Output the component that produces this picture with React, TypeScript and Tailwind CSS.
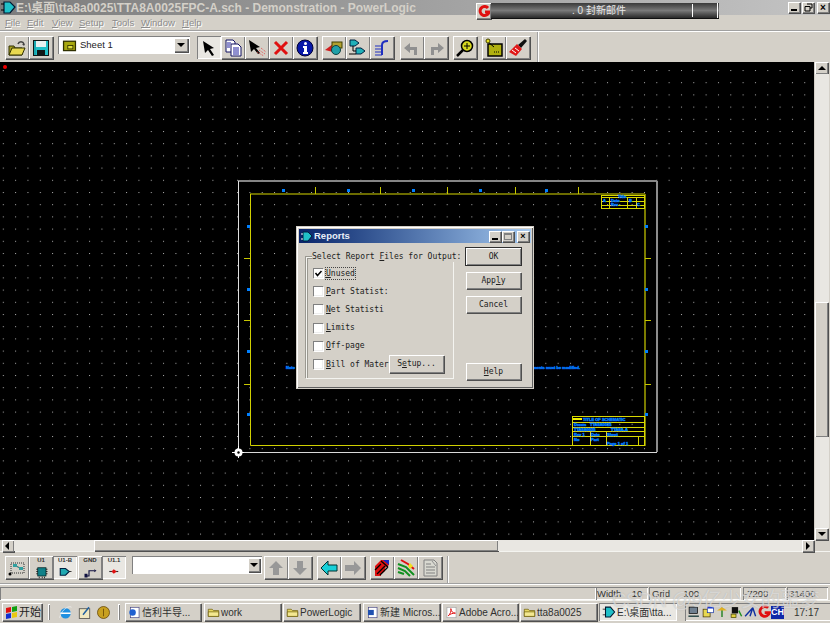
import React from "react";

const raised = "shadow-[inset_1px_1px_0_#fff,inset_-1px_-1px_0_#808080,1px_1px_0_#505050] bg-[#d4d0c8]";
const sunken = "shadow-[inset_1px_1px_0_#808080,inset_-1px_-1px_0_#fff]";
const dither = "bg-[#e9e7e2]";
const mono = "font-['DejaVu_Sans_Mono','Liberation_Mono',monospace] text-[8px] text-[#202020]";

function Ico({ children, s = 20 }: { children: React.ReactNode; s?: number }) {
  return <svg width={s} height={s} viewBox="0 0 20 20" className="block">{children}</svg>;
}

function Btn({ children, on, w = "w-[24px]", cls = "" }: { children?: React.ReactNode; on?: boolean; w?: string; cls?: string }) {
  return (
    <div className={`${w} h-[23px] shrink-0 flex items-center justify-center ${on ? `${sunken} ${dither}` : raised} ${cls}`}>{children}</div>
  );
}

const icons: Record<string, React.ReactNode> = {
  open: <Ico><path d="M2 8h5l1 2h7v7H2z" fill="#a8a020" stroke="#303000" /><path d="M2 17l3-7h13l-3 7z" fill="#e8d850" stroke="#303000" /><path d="M11 6c1-3 5-3 6 0" fill="none" stroke="#404040" strokeWidth="1.5" /><path d="M17 8l-2-2h3z" fill="#404040" /></Ico>,
  save: <Ico><rect x="2" y="2" width="16" height="16" fill="#101818" /><rect x="3" y="3" width="14" height="14" fill="#20c0c8" /><rect x="5" y="3" width="10" height="6" fill="#e8f0f0" /><rect x="6" y="12" width="8" height="5" fill="#101818" /><rect x="3" y="3" width="2" height="14" fill="#18a8b0" /></Ico>,
  sel: <Ico><path d="M4 3l11 7-4 1 4 6-2 1-4-6-3 3z" fill="#000" /></Ico>,
  copy: <Ico><path d="M3 2h7l2 2v10H3z" fill="#fff" stroke="#101060" /><path d="M8 6h7l3 3v9H8z" fill="#fff" stroke="#101060" /><path d="M10 10h6M10 12h6M10 14h6M10 16h6M4 5h4M4 7h3M4 9h3" stroke="#2020a0" /></Ico>,
  arrowRed: <Ico><path d="M2 2l11 7-4 1 4 5-2 1-4-5-3 3z" fill="#000" /><path d="M10 14l7 4M12 12l6 4M14 10l5 4" stroke="#e05050" strokeDasharray="1 1" /></Ico>,
  del: <Ico><path d="M4 4l12 12M16 4L4 16" stroke="#e01010" strokeWidth="3" /></Ico>,
  info: <Ico><circle cx="10" cy="10" r="8" fill="#0818a8" stroke="#000030" /><circle cx="10.5" cy="5.5" r="1.5" fill="#fff" /><path d="M8 8h4v6h1v2H8v-2h1v-4H8z" fill="#fff" /></Ico>,
  part: <Ico><path d="M1 12l8-6v8z" fill="#d02020" /><rect x="8" y="4" width="10" height="6" fill="#b0a030" stroke="#404000" /><circle cx="12" cy="12" r="4.5" fill="#20a0a8" stroke="#104040" /></Ico>,
  gate: <Ico><path d="M2 2h5l4 3-4 3H2z" fill="#20b0b8" stroke="#002040" /><path d="M8 10h5l4 3-4 3H8z" fill="#20b0b8" stroke="#002040" /><path d="M5 8v5h3M1 16h7" stroke="#000" fill="none" /></Ico>,
  bus: <Ico><path d="M10 17V7c0-3 2-4 6-4" fill="none" stroke="#2030c0" strokeWidth="2" /><path d="M3 8h7M3 11h7M3 14h7M3 17h7" stroke="#2030c0" /></Ico>,
  undo: <Ico><path d="M15 17V9H8V5L2 10l6 5v-3h4v5z" fill="#909090" /></Ico>,
  redo: <Ico><path d="M5 17V9h7V5l6 5-6 5v-3H8v5z" fill="#909090" /></Ico>,
  zoom: <Ico><circle cx="12" cy="8" r="5.5" fill="#d8d820" stroke="#000" strokeWidth="1.5" /><path d="M12 5v6M9 8h6" stroke="#000" /><path d="M8 12l-6 6" stroke="#000" strokeWidth="2.5" /></Ico>,
  sheet: <Ico><rect x="4" y="6" width="14" height="12" fill="#b0b010" stroke="#000" strokeWidth="1.5" /><path d="M3 3l7 6" stroke="#000" /><circle cx="4" cy="3" r="2" fill="#e8e020" stroke="#404000" /><path d="M10 14h6" stroke="#000" strokeDasharray="1 1" /></Ico>,
  brush: <Ico><path d="M17 1l2 2-6 7-3-3z" fill="#101010" /><path d="M9 6l5 5-6 7-7-4z" fill="#e01818" /><path d="M4 12l4 3M7 10l4 3" stroke="#fff" /></Ico>,
  mark: <Ico><path d="M4 5h13v10H4z" fill="none" stroke="#303030" strokeDasharray="1 1" /><path d="M6 7l5 2 5 2" stroke="#206060" /><rect x="6" y="6" width="4" height="3" fill="#30a0a0" /><rect x="12" y="9" width="4" height="3" fill="#30a0a0" /><circle cx="3" cy="16" r="1.5" fill="#000" /></Ico>,
  chip: <Ico><rect x="5" y="5" width="11" height="11" fill="#108088" stroke="#002020" /><path d="M3 7h2M3 10h2M3 13h2M16 7h2M16 10h2M16 13h2M7 17v2M11 17v2M14 17v2" stroke="#000" /></Ico>,
  ugate: <Ico><path d="M3 6h7l5 4-5 5H3z" fill="#20a8b0" stroke="#002040" strokeWidth="1.5" /><path d="M15 10h3" stroke="#000" /></Ico>,
  gnd: <Ico><path d="M4 16h4v-7h7" fill="none" stroke="#101040" strokeWidth="1.5" /><path d="M15 7l3 2-3 2z" fill="#101040" /><rect x="2" y="13" width="4" height="5" fill="#101040" /></Ico>,
  pin: <Ico><path d="M3 10h12" stroke="#303030" strokeWidth="1.5" /><path d="M9 7l4 3-4 3-3-3z" fill="#e01010" /></Ico>,
  up: <Ico><path d="M10 3l7 7h-4v7H7v-7H3z" fill="#989898" /></Ico>,
  down: <Ico><path d="M10 17l7-7h-4V3H7v7H3z" fill="#989898" /></Ico>,
  left: <Ico><path d="M2 10l7-7v4h9v6H9v4z" fill="#18d0d8" stroke="#003030" /></Ico>,
  right: <Ico><path d="M18 10l-7-7v4H2v6h9v4z" fill="#989898" /></Ico>,
  copper: <Ico><path d="M3 18V8l6-6h8v5l-4 3v3l-4 3v2z" fill="#e01010" /><path d="M3 12l6-6M5 16l8-8M8 17l8-8M9 3l7 6" stroke="#000" strokeWidth="1.3" fill="none" /><path d="M11 2h6v5z" fill="#1828c0" /></Ico>,
  route: <Ico><path d="M2 6l8 3 8 8M2 10l7 3 5 5M2 14l6 2" stroke="#109020" strokeWidth="2" fill="none" /><path d="M5 2l7 4 6 5" stroke="#e01010" strokeWidth="2" fill="none" /><path d="M14 5l3 3-3 3-2-3z" fill="#f0e020" /></Ico>,
  report: <Ico><path d="M4 2h10l3 3v13H4z" fill="#d8d8d0" stroke="#808080" /><path d="M6 6h5M6 9h9M6 12h9M6 15h9" stroke="#808080" /><path d="M12 3l4 5" stroke="#909090" /></Ico>,
  chipSm: <Ico><rect x="3" y="5" width="14" height="11" fill="#a8a810" stroke="#303000" strokeWidth="1.5" /><rect x="8" y="10" width="6" height="4" fill="#e0e040" stroke="#303000" /></Ico>,
};

function Arrow({ dir }: { dir: "l" | "r" | "u" | "d" }) {
  const p = { l: "M6 1v8L2 5z", r: "M3 1v8l4-4z", u: "M1 7h8L5 3z", d: "M1 3h8L5 7z" }[dir];
  return <svg width="10" height="10" viewBox="0 0 10 10"><path d={p} fill="#000" /></svg>;
}

function Labeled({ label, icon }: { label: string; icon: React.ReactNode }) {
  return (
    <div className="flex flex-col items-center leading-none">
      <span className="text-[6px] font-bold text-[#303030] h-[7px] leading-[7px]">{label}</span>
      {icon}
    </div>
  );
}

function Schematic() {
  const topTicks = [315.5, 380.5, 447.5, 515.5, 578.5];
  const sideTicks = [258.5, 320.5, 384.5];
  const blues: [number, number][] = [[283, 190], [348, 190], [413, 190], [480, 190], [546, 190], [248, 226], [248, 289], [248, 351], [248, 414], [646, 226], [646, 289], [646, 351], [646, 414]];
  const hLinesT = [197.5, 201.5, 205.5];
  const vLinesT = [609.5, 627.5, 636.5];
  return (
    <svg width="814" height="478" viewBox="0 62 814 478" className="block">
      <defs>
        <pattern id="dots" x="2.8" y="70" width="12.33" height="12.2" patternUnits="userSpaceOnUse">
          <rect width="1" height="1" fill="#b0b0b0" />
        </pattern>
      </defs>
      <rect x="0" y="62" width="814" height="478" fill="#000" />
      <rect x="0" y="62" width="814" height="478" fill="url(#dots)" />
      <circle cx="5" cy="67" r="2" fill="#f00000" />
      <path d="M238 181H657" stroke="#858585" strokeWidth="2" />
      <path d="M657 181V452" stroke="#8c8c8c" strokeWidth="2" />
      <path d="M238.500 181V452" stroke="#e0e0e0" />
      <path d="M238 452.500H657" stroke="#d8d8d8" />
      <path d="M250 194H645" stroke="#6c6c00" strokeWidth="2" />
      <path d="M645 194V446" stroke="#7c7c00" strokeWidth="2" />
      <path d="M250.500 194V445.500H645" stroke="#d0d000" fill="none" />
      {topTicks.map((x) => <path key={x} d={`M${x} 187V194`} stroke="#c8c800" />)}
      {sideTicks.map((y) => <path key={y} d={`M244 ${y}H250M645 ${y}H651`} stroke="#c8c800" />)}
      {blues.map(([x, y]) => <rect key={`${x}-${y}`} x={x - 1} y={y - 1} width="3" height="3" fill="#0080ff" />)}
      <g stroke="#d8d800" fill="none">
        <rect x="601.5" y="195.5" width="43" height="13" />
        {hLinesT.map((y) => <path key={y} d={`M602 ${y}H645`} />)}
        {vLinesT.map((x) => <path key={x} d={`M${x} 197V209`} />)}
      </g>
      <g fill="#10f0ff" stroke="#0060ff" strokeWidth="0.4" fontSize="4" fontWeight="700" fontFamily="Liberation Sans">
        <text x="618" y="198">Title</text>
        <text x="603" y="201.500">A</text>
        <text x="611" y="201.500">Date</text>
        <text x="629" y="201.500">B</text>
        <text x="611" y="205.500">Rev</text>
        <text x="637" y="205.500">C</text>
      </g>
      <g stroke="#d8d800" fill="none">
        <rect x="572.5" y="416.5" width="72" height="29" />
        <path d="M573 422.500H645M573 427.500H645M573 431.500H645M573 436.500H645M590.500 431V446M606.500 431V446M638.500 436V446" />
      </g>
      <rect x="573" y="418" width="9" height="2" fill="#f0f000" />
      <g fill="#10f0ff" stroke="#0060ff" strokeWidth="0.4" fontSize="4" fontWeight="700" fontFamily="Liberation Sans">
        <text x="583" y="421">TITLE OF SCHEMATIC</text>
        <text x="574" y="426">Drawn</text>
        <text x="590" y="426">TTA8A0025</text>
        <text x="574" y="431">TTA8A0025</text>
        <text x="611" y="431">TTA8A-A</text>
        <text x="574" y="435.500">Rev 1</text>
        <text x="591" y="435.500">Date</text>
        <text x="607" y="435.500">Sheet</text>
        <text x="574" y="441">No</text>
        <text x="591" y="441">Part</text>
        <text x="607" y="444.500">Page 1 of 1</text>
        <text x="286" y="369">Note</text>
        <text x="533" y="369">ments must be modified.</text>
      </g>
      <path d="M232 452.500H244M238.500 446V458" stroke="#fff" />
      <circle cx="238.500" cy="452.500" r="4" fill="#fff" />
      <circle cx="238.500" cy="452.500" r="1.2" fill="#000" />
    </svg>
  );
}

function Check({ label, checked, focus }: { label: string; checked?: boolean; focus?: boolean }) {
  const first = label[0];
  return (
    <div className="flex items-center h-[18.200px] gap-[3px]">
      <div className="w-[10px] h-[10px] bg-white shrink-0 flex items-center justify-center shadow-[inset_1px_1px_0_#808080,inset_-1px_-1px_0_#eeeeee,1px_1px_0_#fff]">
        {checked && <svg width="9" height="9" viewBox="0 0 9 9"><path d="M1.500 4l2 2.500L7.500 2" stroke="#000" strokeWidth="1.500" fill="none" /></svg>}
      </div>
      <div className={`overflow-hidden whitespace-nowrap ${mono} leading-[11px] ${focus ? "outline-1 outline-dotted outline-[#444]" : ""}`}>
        <u>{first}</u>{label.slice(1)}
      </div>
    </div>
  );
}

function DlgBtn({ children, cls = "" }: { children: React.ReactNode; cls?: string }) {
  return <div className={`h-[17px] w-[55px] flex items-center justify-center ${mono} ${raised} ${cls}`}>{children}</div>;
}

function Dialog() {
  return (
    <div className="absolute left-[297px] top-[165px] w-[236px] h-[161px] bg-[#d4d0c8] p-[2px] shadow-[inset_1px_1px_0_#fff,inset_-1px_-1px_0_#606060,0_0_0_1px_#d4d0c8] flex flex-col">
      <div className="h-[14px] bg-gradient-to-r from-[#0a246a] to-[#a6caf0] flex items-center pl-[2px] pr-[2px]">
        <svg width="13" height="11" viewBox="0 0 13 11"><path d="M2 1h5l4 4-4 5H2z" fill="#20c0c8" stroke="#002040" /><path d="M0 3h2M0 8h2" stroke="#fff" /></svg>
        <span className="ml-[0px] text-[9.500px] font-bold text-[#e8eef8] flex-1">Reports</span>
        <div className={`w-[12px] h-[11px] ${raised} flex items-end justify-center pb-[2px]`}><div className="w-[6px] h-[2px] bg-black" /></div>
        <div className={`w-[12px] h-[11px] ml-[1px] ${raised} flex items-center justify-center`}><div className="w-[8px] h-[7px] border border-[#808080] border-t-2" /></div>
        <div className={`w-[12px] h-[11px] ml-[3px] ${raised} flex items-center justify-center text-[9px] font-bold leading-none text-black`}>×</div>
      </div>
      <div className="flex flex-1">
        <div className="relative ml-[7px] mt-[14px] w-[148px] h-[122px] border border-[#f4f4f0] shadow-[inset_1px_1px_0_#9a9890,-1px_-1px_0_#9a9890] pl-[6px] pt-[6px] flex flex-col">
          <div className={`absolute left-[5px] top-[-6px] bg-[#d4d0c8] whitespace-nowrap pr-[1px] ${mono} leading-[10px]`}>
            Select Report <u>F</u>iles for Output:
          </div>
          <Check label="Unused" checked focus />
          <Check label="Part Statist:" />
          <Check label="Net Statisti" />
          <Check label="Limits" />
          <Check label="Off-page" />
          <Check label="Bill of Mater" />
          <div className={`absolute left-[82px] top-[97px] h-[18px] w-[55px] flex items-center justify-center ${mono} ${raised}`}>S<u>e</u>tup...</div>
        </div>
        <div className="ml-[12px] mt-[5px] flex flex-col pb-[6px]">
          <DlgBtn cls="outline-1 outline-[#303030]">OK</DlgBtn>
          <DlgBtn cls="mt-[7px]">App<u>l</u>y</DlgBtn>
          <DlgBtn cls="mt-[7px]"><span>Cancel</span></DlgBtn>
          <DlgBtn cls="mt-auto"><u>H</u>elp</DlgBtn>
        </div>
      </div>
    </div>
  );
}

function TaskBtn({ icon, text, w, active }: { icon: React.ReactNode; text: string; w: string; active?: boolean }) {
  return (
    <div className={`${w} h-[18px] shrink-0 flex items-center pl-[3px] overflow-hidden whitespace-nowrap text-[10px] text-[#303030] ${active ? `${sunken} ${dither}` : raised}`}>
      <span className="shrink-0 mr-[1px]">{icon}</span>{text}
    </div>
  );
}

const folder = <Ico s={13}><path d="M2 5h6l2 2h8v9H2z" fill="#e8d860" stroke="#605000" /><path d="M2 9h16v7H2z" fill="#f4e890" stroke="#605000" /></Ico>;
const handle = <div className="w-[2px] h-[16px] shadow-[inset_1px_1px_0_#fff,inset_-1px_-1px_0_#808080] shrink-0" />;

export default function App() {
  const cjk = "font-['Liberation_Sans','Noto_Sans_CJK_SC',sans-serif]";
  const menu = [["F", "ile", "w-[22px]"], ["E", "dit", "w-[25px]"], ["V", "iew", "w-[27px]"], ["S", "etup", "w-[33px]"], ["T", "ools", "w-[29px]"], ["W", "indow", "w-[41px]"], ["H", "elp", "w-[20px]"]];
  return (
    <div className={`relative w-[830px] h-[623px] overflow-hidden bg-[#d4d0c8] flex flex-col ${cjk}`}>
      {/* title */}
      <div className="h-[15px] shrink-0 bg-gradient-to-r from-[#7c7c7c] to-[#c4c4c4] flex items-center">
        <svg width="15" height="13" viewBox="0 0 15 13" className="ml-[1px]"><path d="M3 1h6l5 5-5 6H3z" fill="#20c0c8" stroke="#001830" strokeWidth="1.200" /><path d="M0 3h3M0 9h3" stroke="#000" /></svg>
        <span className="text-[12px] font-bold text-[#d4d0c8] whitespace-nowrap leading-none">E:\桌面\tta8a0025\TTA8A0025FPC-A.sch - Demonstration - PowerLogic</span>
        <div className="ml-auto flex items-center pr-[1px]">
          <div className={`w-[12px] h-[11px] ${raised} flex items-end justify-center pb-[2px]`}><div className="w-[6px] h-[2px] bg-black" /></div>
          <div className={`w-[12px] h-[11px] ml-[2px] ${raised} flex items-center justify-center`}><svg width="9" height="9" viewBox="0 0 9 9"><path d="M3 1h5v4H6M1 3.500h5V8H1z" fill="none" stroke="#000" /></svg></div>
          <div className={`w-[12px] h-[11px] ml-[3px] ${raised} flex items-center justify-center text-[10px] font-bold leading-none text-black`}>×</div>
        </div>
      </div>
      {/* notifier */}
      <div className="absolute left-[476px] top-[3px] w-[243px] h-[16px] flex">
        <div className={`w-[15px] h-[16px] ${raised} flex items-center justify-center`}>
          <svg width="12" height="12" viewBox="0 0 12 12"><path d="M10 3A4.500 4.500 0 1 0 11 7H7" fill="none" stroke="#e01010" strokeWidth="3" /></svg>
        </div>
        <div className="relative flex-1 bg-gradient-to-b from-[#3a3a3a] via-[#7a7a7a] to-[#2a2a2a] border-b border-[#111] flex items-center justify-center pr-[12px] text-[10px] text-[#e8e8e8] whitespace-pre">
          . 0 封新邮件
          <div className="absolute left-[201px] top-[1px] w-[1px] h-[13px] bg-white" />
          <div className="absolute right-[1px] top-0 w-[1px] h-[15px] bg-white" />
        </div>
      </div>
      {/* menu */}
      <div className="h-[16px] pl-[5px] shrink-0 flex items-center text-[9.500px] text-[#8c8c8c] [text-shadow:1px_1px_0_#ffffff] leading-none border-b border-[#a0a0a0]">
        {menu.map(([a, b, m]) => <span key={a} className={m}><u>{a}</u>{b}</span>)}
      </div>
      {/* toolbar */}
      <div className="h-[31px] shrink-0 pl-[5px] pt-[4px] flex items-start border-t border-white">
        <Btn>{icons.open}</Btn>
        <Btn>{icons.save}</Btn>
        <div className={`ml-[5px] w-[132px] h-[18px] bg-white flex items-center ${sunken}`}>
          <span className="ml-[3px]"><Ico s={17}>{icons.chipSm}</Ico></span>
          <span className="ml-[2px] text-[9.500px] text-[#222] flex-1">Sheet 1</span>
          <div className={`w-[14px] h-[14px] mr-[2px] flex items-center justify-center ${raised}`}><Arrow dir="d" /></div>
        </div>
        <Btn on cls="ml-[7px]">{icons.sel}</Btn>
        <Btn>{icons.copy}</Btn>
        <Btn>{icons.arrowRed}</Btn>
        <Btn>{icons.del}</Btn>
        <Btn>{icons.info}</Btn>
        <Btn cls="ml-[5px]">{icons.part}</Btn>
        <Btn>{icons.gate}</Btn>
        <Btn>{icons.bus}</Btn>
        <Btn cls="ml-[6px]">{icons.undo}</Btn>
        <Btn>{icons.redo}</Btn>
        <Btn cls="ml-[5px]">{icons.zoom}</Btn>
        <Btn cls="ml-[5px]">{icons.sheet}</Btn>
        <Btn>{icons.brush}</Btn>
        <div className="ml-[7px] w-[2px] h-[31px] -mt-[4px] shadow-[inset_1px_0_0_#a0a0a0,inset_-1px_0_0_#fff]" />
      </div>
      {/* canvas */}
      <div className="relative h-[478px] shrink-0 flex">
        <Schematic />
        <div className="w-[14px] ml-[1px] flex flex-col">
          <div className={`h-[12px] w-[13px] flex items-center justify-center ${raised}`}><Arrow dir="u" /></div>
          <div className={`h-[228px] ${dither}`} />
          <div className={`h-[135px] w-[13px] ${raised}`} />
          <div className={`flex-1 ${dither}`} />
          <div className={`h-[12px] w-[13px] flex items-center justify-center ${raised}`}><Arrow dir="d" /></div>
        </div>
        <Dialog />
      </div>
      {/* hscroll */}
      <div className="h-[12px] shrink-0 flex border-b border-[#f4f4f0]">
        <div className={`ml-[2px] w-[12px] h-[12px] flex items-center justify-center ${raised}`}><Arrow dir="l" /></div>
        <div className={`w-[80px] ${dither}`} />
        <div className={`w-[404px] ${raised}`} />
        <div className={`w-[304px] ${dither}`} />
        <div className={`w-[12px] h-[12px] flex items-center justify-center ${raised}`}><Arrow dir="r" /></div>
      </div>
      {/* bottom toolbar */}
      <div className="h-[32px] shrink-0 pl-[5px] pt-[4px] flex items-start border-b border-[#a0a0a0]">
        <Btn>{icons.mark}</Btn>
        <Btn><Labeled label="U1" icon={<Ico s={15}>{icons.chip}</Ico>} /></Btn>
        <Btn on><Labeled label="U1-B" icon={<Ico s={15}>{icons.ugate}</Ico>} /></Btn>
        <Btn cls="ml-[1px]"><Labeled label="GND" icon={<Ico s={15}>{icons.gnd}</Ico>} /></Btn>
        <Btn on><Labeled label="U1.1" icon={<Ico s={15}>{icons.pin}</Ico>} /></Btn>
        <div className={`ml-[6px] w-[130px] h-[18px] bg-white flex items-center justify-end ${sunken}`}>
          <div className={`w-[12px] h-[14px] mr-[2px] flex items-center justify-center ${raised}`}><Arrow dir="d" /></div>
        </div>
        <Btn cls="ml-[2px]">{icons.up}</Btn>
        <Btn>{icons.down}</Btn>
        <Btn cls="ml-[5px]">{icons.left}</Btn>
        <Btn>{icons.right}</Btn>
        <Btn cls="ml-[5px]">{icons.copper}</Btn>
        <Btn>{icons.route}</Btn>
        <Btn>{icons.report}</Btn>
        <div className="ml-[5px] w-[2px] h-[27px] shadow-[inset_1px_0_0_#a0a0a0,inset_-1px_0_0_#fff]" />
      </div>
      {/* status */}
      <div className="h-[16px] shrink-0 flex items-end text-[9.500px] text-[#333] leading-none border-t border-white">
        <div className={`w-[596px] h-[13px] ${sunken}`} />
        <div className={`w-[52px] h-[13px] flex items-center pl-[1px] whitespace-pre ${sunken}`}>Width    10</div>
        <div className={`w-[92px] ml-[1px] h-[13px] flex items-center pl-[3px] whitespace-pre ${sunken}`}>Grid     100</div>
        <div className={`w-[43px] ml-[2px] h-[13px] flex items-center pl-[1px] ${sunken}`}>-7200</div>
        <div className={`w-[41px] ml-[1px] h-[13px] flex items-center pl-[2px] ${sunken}`}>31400</div>
      </div>
      {/* taskbar */}
      <div className="flex-1 flex items-center gap-[2px] border-t border-[#f4f4f0] pl-[2px]">
        <div className={`w-[40px] h-[18px] flex items-center shrink-0 text-[11px] text-[#222] pl-[3px] ${raised}`}>
          <svg width="14" height="13" viewBox="0 0 14 13"><path d="M1 2l5-1v5l-5 1z" fill="#e01010" /><path d="M7 1l5-1v5l-5 1z" fill="#10a010" /><path d="M1 8l5-1v5l-5 1z" fill="#1030d0" /><path d="M7 7l5-1v5l-5 1z" fill="#e8c810" /></svg>
          开始
        </div>
        <div className="ml-[4px]">{handle}</div>
        <div className="ml-[6px] flex items-center gap-[4px] shrink-0">
          <Ico s={15}><circle cx="10" cy="11" r="7" fill="#2090e0" /><path d="M3 11h14" stroke="#fff" strokeWidth="2" /><path d="M2 17C6 3 16 1 18 3" stroke="#f0f0f0" fill="none" /></Ico>
          <Ico s={15}><rect x="3" y="5" width="14" height="13" fill="#f0e8c0" stroke="#404040" /><path d="M8 13l8-10" stroke="#2060a0" strokeWidth="2" /></Ico>
          <Ico s={15}><circle cx="10" cy="10" r="8" fill="#c8a020" stroke="#604000" /><path d="M10 5v10" stroke="#604000" /></Ico>
        </div>
        <div className="ml-[5px]">{handle}</div>
        <TaskBtn w="w-[76px] ml-[3px]" icon={<Ico s={13}><rect x="4" y="2" width="13" height="16" fill="#fff" stroke="#404080" /><circle cx="7" cy="10" r="5" fill="#2060d0" /></Ico>} text="信利半导..." />
        <TaskBtn w="w-[77px] ml-[1px]" icon={folder} text="work" />
        <TaskBtn w="w-[77px]" icon={folder} text="PowerLogic" />
        <TaskBtn w="w-[77px] ml-[1px]" icon={<Ico s={13}><rect x="4" y="2" width="13" height="16" fill="#fff" stroke="#404080" /><path d="M3 6h9v8H3z" fill="#2050b0" /></Ico>} text="新建 Micros..." />
        <TaskBtn w="w-[76px]" icon={<Ico s={13}><rect x="3" y="2" width="14" height="16" fill="#fff" stroke="#a0a0a0" /><path d="M5 15c3-2 5-8 4-11 0 4 3 7 7 7-4 0-8 1-11 4z" fill="none" stroke="#e01010" strokeWidth="1.500" /></Ico>} text="Adobe Acro..." />
        <TaskBtn w="w-[77px]" icon={folder} text="tta8a0025" />
        <TaskBtn w="w-[78px]" active icon={<Ico s={14}><path d="M5 3h7l6 7-6 7H5z" fill="#20c0c8" stroke="#001830" strokeWidth="1.500" /><path d="M1 6h4M1 14h4" stroke="#000" /></Ico>} text="E:\桌面\tta..." />
        <div className={`ml-[6px] w-[146px] h-[18px] shrink-0 flex items-center pl-[2px] text-[10px] text-[#333] ${sunken}`}>
          <div className="flex items-center">
            <Ico s={14}><rect x="3" y="3" width="12" height="9" fill="#708090" stroke="#000" /><path d="M2 16h15" stroke="#204040" strokeWidth="2" /></Ico>
            <Ico s={14}><rect x="3" y="6" width="10" height="11" fill="#e8d850" stroke="#403000" /><rect x="9" y="3" width="9" height="8" fill="#fff" stroke="#1030a0" /><path d="M9 4h9" stroke="#1030d0" strokeWidth="2" /></Ico>
            <Ico s={14}><path d="M10 4v13" stroke="#208020" strokeWidth="2" /><path d="M3 8l7-5 7 5z" fill="#e0b020" /></Ico>
            <Ico s={14}><rect x="4" y="3" width="9" height="9" fill="#101010" /><rect x="3" y="13" width="7" height="5" fill="#e0d040" stroke="#404000" /><path d="M14 8l4 8" stroke="#209020" strokeWidth="2" /></Ico>
            <Ico s={14}><path d="M3 16L14 4M10 16l4-12M14 4l4 12" stroke="#1030a0" strokeWidth="2" fill="none" /></Ico>
            <Ico s={14}><path d="M16 4A7 7 0 1 0 18 11H11" fill="none" stroke="#e01010" strokeWidth="4" /></Ico>
            <div className="w-[13px] h-[13px] bg-[#1028a8] text-white text-[9px] leading-[13px] text-center font-bold">CH</div>
          </div>
          <span className="ml-[10px]">17:17</span>
        </div>
      </div>
      <div className="absolute left-[612px] top-[590px] text-[20px] leading-none whitespace-nowrap text-[#ffffff80] [text-shadow:0_0_1px_#80808080] pointer-events-none tracking-[-0.500px]">
        CSDN @9亿少女的噩梦
      </div>
    </div>
  );
}
